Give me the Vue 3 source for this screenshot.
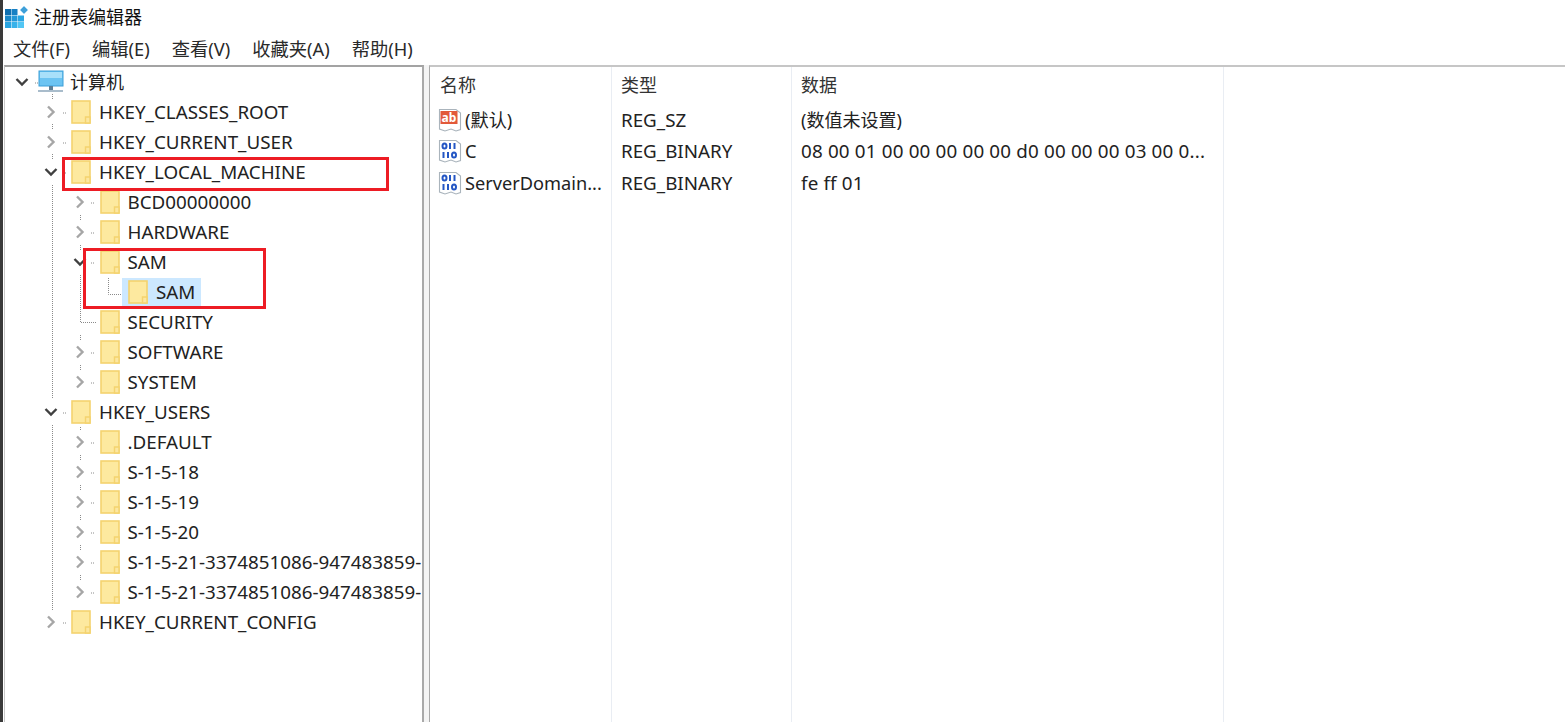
<script setup>
const menus = ['文件(F)', '编辑(E)', '查看(V)', '收藏夹(A)', '帮助(H)']
const rows = [
  { label: 'HKEY_CLASSES_ROOT', depth: 0, state: 'closed' },
  { label: 'HKEY_CURRENT_USER', depth: 0, state: 'closed' },
  { label: 'HKEY_LOCAL_MACHINE', depth: 0, state: 'open' },
  { label: 'BCD00000000', depth: 1, state: 'closed' },
  { label: 'HARDWARE', depth: 1, state: 'closed' },
  { label: 'SAM', depth: 1, state: 'open' },
  { label: 'SAM', depth: 2, state: 'none', selected: true },
  { label: 'SECURITY', depth: 1, state: 'none' },
  { label: 'SOFTWARE', depth: 1, state: 'closed' },
  { label: 'SYSTEM', depth: 1, state: 'closed' },
  { label: 'HKEY_USERS', depth: 0, state: 'open' },
  { label: '.DEFAULT', depth: 1, state: 'closed' },
  { label: 'S-1-5-18', depth: 1, state: 'closed' },
  { label: 'S-1-5-19', depth: 1, state: 'closed' },
  { label: 'S-1-5-20', depth: 1, state: 'closed' },
  { label: 'S-1-5-21-3374851086-947483859-', depth: 1, state: 'closed' },
  { label: 'S-1-5-21-3374851086-947483859-', depth: 1, state: 'closed' },
  { label: 'HKEY_CURRENT_CONFIG', depth: 0, state: 'closed' },
]
const values = [
  { kind: 'ab', name: '(默认)', type: 'REG_SZ', data: '(数值未设置)', cjk: true },
  { kind: 'bin', name: 'C', type: 'REG_BINARY', data: '08 00 01 00 00 00 00 00 d0 00 00 00 03 00 0...' },
  { kind: 'bin', name: 'ServerDomain...', type: 'REG_BINARY', data: 'fe ff 01' },
]
</script>

<template>
  <div class="window">
    <header class="titlebar">
      <svg class="app-icon" width="26" height="28" viewBox="0 0 26 28">
        <rect x="2" y="6" width="6" height="6" fill="#0f6fb0" />
        <rect x="8.5" y="6" width="6" height="6" fill="#1680c4" />
        <rect x="2" y="12.5" width="6" height="6" fill="#1b88c8" />
        <rect x="8.5" y="12.5" width="6" height="6" fill="#2398d8" />
        <rect x="15" y="12.5" width="6" height="6" fill="#2aa5e2" />
        <rect x="2" y="19" width="6" height="6" fill="#2aa5e2" />
        <rect x="8.5" y="19" width="6" height="6" fill="#38b2ea" />
        <rect x="15" y="19" width="6" height="6" fill="#52c6f4" />
        <path d="M21 3l4 4-4 4-4-4z" fill="#3f9fd8" stroke="#a8d8f4" />
      </svg>
      <span class="title">注册表编辑器</span>
    </header>
    <nav class="menubar">
      <span v-for="m in menus" :key="m" class="menu">{{ m }}</span>
    </nav>
    <main class="panes">
      <section class="tree">
        <svg class="guides" width="418" height="560" viewBox="0 0 418 560">
          <g stroke="#8a8a8a" stroke-dasharray="1 1" fill="none">
            <path d="M47.5 27V33M47.5 57V63M47.5 87V93M47.5 118V332M47.5 358V543" />
            <path d="M75.5 148V154M75.5 178V184M75.5 208V255.5H91" />
            <path d="M75.5 268V274M75.5 298V304M75.5 358V364M75.5 388V394M75.5 418V424M75.5 448V454M75.5 478V484M75.5 508V514" />
            <path d="M103.5 211V227.5H117" />
          </g>
          <g stroke="#8a8a8a" stroke-dasharray="1 1" fill="none">
            <path d="M30 16H34M58 46H62M58 76H62M58 106H62M86 136H90M86 166H90M86 196H90" />
            <path d="M86 286H90M86 316H90M58 346H62M86 376H90M86 406H90M86 436H90M86 466H90M86 496H90M86 526H90M58 556H62" />
          </g>
        </svg>
        <div class="node root">
          <svg class="chev" width="14" height="10" viewBox="0 0 14 10"><path d="M1.5 2L7 7.5 12.5 2" fill="none" stroke="#404040" stroke-width="2.4" /></svg>
          <svg class="computer" width="26" height="24" viewBox="0 0 26 24">
            <rect x="1" y="1" width="24" height="15" fill="#6cc4f2" stroke="#3d9fd8" />
            <rect x="2" y="2" width="22" height="6" fill="#a8e0fa" />
            <rect x="11" y="16" width="4" height="4" fill="#5d7f96" />
            <rect x="0" y="20" width="25" height="2" fill="#a9bccb" />
          </svg>
          <span class="node-label">计算机</span>
        </div>
        <div
          v-for="(r, i) in rows"
          :key="i"
          class="node"
          :class="['depth-' + r.depth, { selected: r.selected }]"
        >
          <span class="twist">
            <svg v-if="r.state === 'closed'" width="10" height="14" viewBox="0 0 10 14"><path d="M2 1.5L7.5 7 2 12.5" fill="none" stroke="#a6a6a6" stroke-width="2.4" /></svg>
            <svg v-else-if="r.state === 'open'" width="14" height="10" viewBox="0 0 14 10"><path d="M1.5 2L7 7.5 12.5 2" fill="none" stroke="#404040" stroke-width="2.4" /></svg>
          </span>
          <span class="item" :class="{ highlighted: r.selected }">
            <svg class="folder" width="20" height="24" viewBox="0 0 20 24">
              <rect x="1" y="1" width="18" height="22" fill="#fde99f" stroke="#f4d36f" stroke-width="1.6" />
              <path d="M14.5 23V17H19V23z" fill="#fce7a0" stroke="#f4d36f" stroke-width="1.4" />
            </svg>
            <span class="node-label">{{ r.label }}</span>
          </span>
        </div>
      </section>
      <div class="splitter"></div>
      <section class="list">
        <div class="col-lines">
          <i class="line l1"></i><i class="line l2"></i><i class="line l3"></i>
        </div>
        <div class="list-row head">
          <span class="c1">名称</span><span class="c2">类型</span><span class="c3">数据</span>
        </div>
        <div v-for="v in values" :key="v.name" class="list-row value">
          <span class="c1 with-icon">
            <svg class="val-icon" width="24" height="24" viewBox="0 0 24 24">
              <path d="M1.5 1.5H18L22.5 5V21.5L18 23L13 21L7 23L1.5 21z" fill="#fff" stroke="#aab4bc" stroke-width="1.1" />
              <template v-if="v.kind === 'ab'">
                <rect x="2.5" y="3" width="17" height="13" fill="#e2593a" />
                <text x="11" y="14" text-anchor="middle" class="ab-text">ab</text>
              </template>
              <template v-else>
                <g fill="none" stroke="#2456c4" stroke-width="2">
                  <ellipse cx="6.5" cy="7" rx="2" ry="2.6" />
                  <path d="M12 4V10M16.5 4V10" />
                  <path d="M5.5 13V19M10 13V19" />
                  <ellipse cx="16" cy="16" rx="2" ry="2.6" />
                </g>
              </template>
            </svg>
            <span class="val-name" :class="{ raised: v.cjk }">{{ v.name }}</span>
          </span>
          <span class="c2">{{ v.type }}</span>
          <span class="c3" :class="{ 'c3-cjk': v.cjk }">{{ v.data }}</span>
        </div>
      </section>
    </main>
    <div class="mark mark-a"></div>
    <div class="mark mark-b"></div>
  </div>
</template>

<style>
html, body { margin: 0; background: #fff; overflow: hidden; }
</style>

<style scoped>
.window {
  position: relative;
  width: 1565px;
  height: 722px;
  box-sizing: border-box;
  border-left: 3px solid #3a3a3a;
  background: #fff;
  display: flex;
  flex-direction: column;
  overflow: hidden;
  font-family: "Noto Sans", "Noto Sans CJK SC", sans-serif;
  font-size: 18.8px;
  color: #222;
}
.titlebar {
  height: 34px;
  display: flex;
  align-items: center;
  flex: none;
}
.app-icon { flex: none; }
.title { margin-left: 5px; color: #111; font-size: 18px; line-height: 34px; }
.menubar {
  height: 31px;
  box-sizing: border-box;
  padding: 0 0 3px 10px;
  display: flex;
  align-items: center;
  flex: none;
  gap: 22px;
}
.menu { font-size: 18.3px; color: #2a2a2a; }
.panes { flex: 1; display: flex; min-height: 0; }
.tree {
  position: relative;
  width: 420px;
  margin-left: 1px;
  flex: none;
  border-top: 2px solid #a3a3a3;
  border-left: 1px solid #c8c8c8;
  border-right: 2px solid #a9a9a9;
  box-sizing: border-box;
  overflow: hidden;
  white-space: nowrap;
}
.guides { position: absolute; left: 0; top: 0; }
.node {
  position: relative;
  height: 30px;
  display: flex;
  align-items: center;
  white-space: nowrap;
}
.root { padding-left: 10px; }
.chev { flex: none; }
.computer { margin-left: 9px; flex: none; }
.root .node-label { margin-left: 6px; font-size: 18px; padding-bottom: 2px; }
.twist {
  width: 20px;
  flex: none;
  display: flex;
  justify-content: center;
  align-items: center;
}
.depth-0 { padding-left: 36px; }
.depth-1 { padding-left: 64.5px; }
.depth-2 { padding-left: 97px; }
.item {
  display: flex;
  align-items: center;
  height: 29px;
  margin-left: 10px;
  padding-right: 6px;
  background: #fff;
}
.depth-2 .item { margin-left: 0; padding-left: 6px; }
.highlighted { background: #cce8ff; }
.folder { flex: none; }
.node-label {
  margin-left: 8px;
  font-size: 18.8px;
  color: #222;
}
.splitter { width: 5px; flex: none; background: #f4f4f4; }
.list {
  position: relative;
  flex: 1;
  border-top: 2px solid #c6c6c6;
  border-left: 1px solid #a9a9a9;
}
.col-lines { position: absolute; inset: 0; }
.line { position: absolute; top: 0; bottom: 0; width: 1px; background: #e9edf3; }
.l1 { left: 181px; }
.l2 { left: 361px; }
.l3 { left: 793px; }
.list-row { position: relative; display: flex; align-items: center; }
.head { height: 37px; box-sizing: border-box; padding-bottom: 4px; color: #333; }
.head span { font-size: 18px; letter-spacing: 0; }
.value { height: 31.5px; }
.c1 { width: 181px; padding-left: 10px; box-sizing: border-box; flex: none; white-space: nowrap; overflow: hidden; }
.c2 { width: 180px; padding-left: 10px; box-sizing: border-box; flex: none; }
.c3 { padding-left: 10px; white-space: nowrap; letter-spacing: 0.18px; }
.c3-cjk { font-size: 18px; letter-spacing: 0; padding-bottom: 2px; }
.with-icon { display: flex; align-items: center; padding-left: 8px; }
.val-icon { flex: none; }
.val-name { margin-left: 3px; font-size: 18.2px; }
.raised { padding-bottom: 2px; }
.ab-text { font: bold 12px "Noto Sans", sans-serif; fill: #fff; }
.mark { position: absolute; border: 3px solid #ed1c24; box-sizing: border-box; }
.mark-a { left: 59px; top: 157px; width: 327px; height: 34px; }
.mark-b { left: 80px; top: 248px; width: 183px; height: 61px; }
</style>
